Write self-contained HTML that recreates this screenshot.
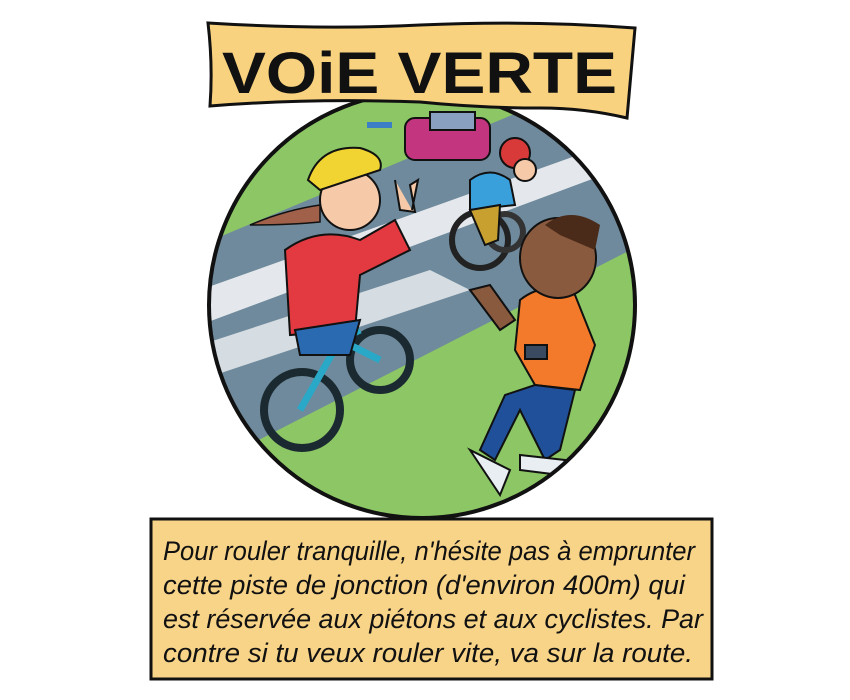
<!DOCTYPE html>
<html><head><meta charset="utf-8"><style>
html,body{margin:0;padding:0;background:#fff;width:850px;height:700px;overflow:hidden}
svg{display:block}
</style></head><body>
<svg width="850" height="700" viewBox="0 0 850 700" xmlns="http://www.w3.org/2000/svg">
<defs><clipPath id="c"><circle cx="422" cy="305" r="213"/></clipPath></defs>
<g clip-path="url(#c)">
<rect x="200" y="90" width="450" height="440" fill="#8cc665"/>
<polygon points="200,245 560,95 650,95 650,240 200,470" fill="#6f8a9c"/>
<polygon points="200,290 620,140 630,165 200,325" fill="#e4e8ec"/>
<polygon points="200,345 430,270 470,290 200,380" fill="#d6dde2"/>
<!-- car -->
<rect x="405" y="118" width="85" height="42" rx="10" fill="#c4357f" stroke="#111" stroke-width="2"/>
<rect x="430" y="112" width="45" height="18" fill="#8aa0c0" stroke="#111" stroke-width="2"/>
<rect x="367" y="122" width="25" height="6" fill="#3c7fc6"/>
<!-- cyclist -->
<circle cx="480" cy="240" r="28" fill="none" stroke="#222" stroke-width="6"/>
<circle cx="505" cy="232" r="18" fill="none" stroke="#333" stroke-width="6"/>
<path d="M470 180 Q490 165 510 180 L515 205 L470 210 Z" fill="#3aa0dc" stroke="#111" stroke-width="2"/>
<path d="M470 210 L500 205 L498 240 L485 245 Z" fill="#c8a030" stroke="#111" stroke-width="2"/>
<circle cx="515" cy="153" r="15" fill="#d83a3a" stroke="#111" stroke-width="2"/>
<circle cx="525" cy="170" r="11" fill="#f6c9a8" stroke="#111" stroke-width="2"/>
<!-- girl bike -->
<circle cx="302" cy="410" r="38" fill="none" stroke="#1a2a30" stroke-width="8"/>
<circle cx="380" cy="360" r="30" fill="none" stroke="#1a2a30" stroke-width="8"/>
<path d="M300 410 L340 340 L380 360 M320 350 L360 330" stroke="#2aa8c8" stroke-width="7" fill="none"/>
<path d="M285 250 Q320 225 360 240 L395 220 L410 250 L360 275 L355 330 L290 335 Z" fill="#e23a40" stroke="#111" stroke-width="2"/>
<path d="M295 330 L360 320 L350 355 L300 355 Z" fill="#2a6ab0" stroke="#111" stroke-width="2"/>
<circle cx="350" cy="200" r="30" fill="#f6c9a8" stroke="#111" stroke-width="2"/>
<path d="M308 180 Q320 145 360 148 Q385 155 380 170 L320 190 Z" fill="#f1d432" stroke="#111" stroke-width="2"/>
<path d="M320 205 Q285 210 250 225 Q290 225 320 222 Z" fill="#a0604a" stroke="#111" stroke-width="1.5"/>
<path d="M395 180 L400 210 L415 212 L410 185 L418 180 L412 210" fill="#f6c9a8" stroke="#111" stroke-width="2"/>
<!-- boy -->
<path d="M520 300 Q545 280 575 295 L595 345 L580 390 L535 385 L515 350 Z" fill="#f27a2a" stroke="#111" stroke-width="2"/>
<path d="M535 385 L575 390 L560 450 L545 460 L520 410 L495 460 L480 450 L505 395 Z" fill="#20509a" stroke="#111" stroke-width="2"/>
<ellipse cx="558" cy="258" rx="38" ry="40" fill="#8a5a3e" stroke="#111" stroke-width="2"/>
<path d="M545 225 Q570 205 600 225 L595 250 L560 235 Z" fill="#4a2a18"/>
<path d="M470 450 L500 495 L510 470 Z" fill="#e8eef2" stroke="#111" stroke-width="2"/>
<path d="M520 455 L565 460 L560 475 L520 470 Z" fill="#e8eef2" stroke="#111" stroke-width="2"/>
<path d="M470 290 L500 330 L515 320 L490 285 Z" fill="#8a5a3e" stroke="#111" stroke-width="2"/>
<rect x="525" y="345" width="22" height="14" fill="#3a4a60" stroke="#111" stroke-width="2"/>
</g>
<circle cx="422" cy="305" r="213" fill="none" stroke="#111" stroke-width="4"/>
<path d="M208 23 Q320 30 420 25 Q530 20 635 28 L627 118 Q585 108 540 108 Q480 108 420 102 Q310 98 210 106 Q213 65 208 23 Z" fill="#f8d27f" stroke="#111" stroke-width="3"/>
<text x="222" y="93" font-family="Liberation Sans, sans-serif" font-weight="bold" font-size="58" textLength="395" lengthAdjust="spacingAndGlyphs" fill="#111">VOiE VERTE</text>
<rect x="151" y="519" width="561" height="160" fill="#f8d489" stroke="#111" stroke-width="3"/>
<g font-family="Liberation Sans Narrow, Liberation Sans, sans-serif" font-size="27" fill="#111" font-style="italic" lengthAdjust="spacingAndGlyphs">
<text x="163" y="560" textLength="532" lengthAdjust="spacingAndGlyphs">Pour rouler tranquille, n'hésite pas à emprunter</text>
<text x="163" y="594" textLength="522" lengthAdjust="spacingAndGlyphs">cette piste de jonction (d'environ 400m) qui</text>
<text x="163" y="628" textLength="540" lengthAdjust="spacingAndGlyphs">est réservée aux piétons et aux cyclistes. Par</text>
<text x="163" y="662" textLength="530" lengthAdjust="spacingAndGlyphs">contre si tu veux rouler vite, va sur la route.</text>
</g>
</svg>
</body></html>
